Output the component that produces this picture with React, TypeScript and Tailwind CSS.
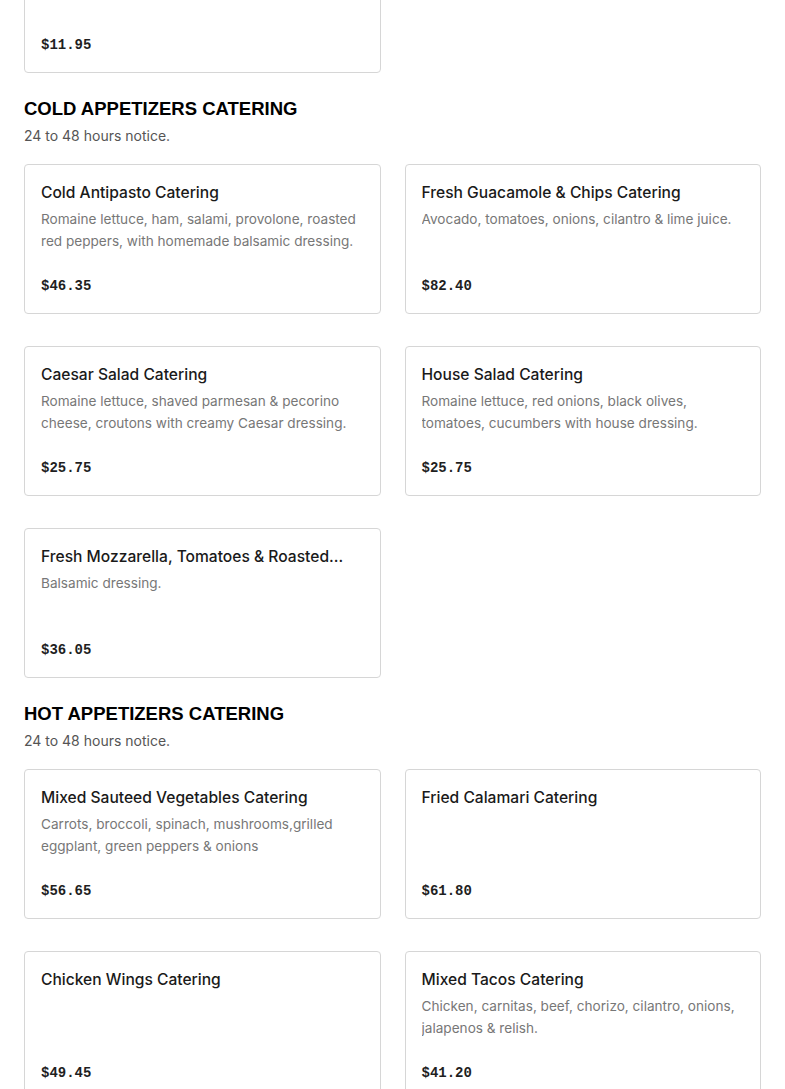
import React from 'react';

interface MenuItem {
  name: string;
  description?: string;
  price: string;
}

interface Section {
  title: string;
  notice: string;
  items: MenuItem[];
}

const sections: Section[] = [
  {
    title: 'COLD APPETIZERS CATERING',
    notice: '24 to 48 hours notice.',
    items: [
      {
        name: 'Cold Antipasto Catering',
        description: 'Romaine lettuce, ham, salami, provolone, roasted red peppers, with homemade balsamic dressing.',
        price: '$46.35',
      },
      {
        name: 'Fresh Guacamole & Chips Catering',
        description: 'Avocado, tomatoes, onions, cilantro & lime juice.',
        price: '$82.40',
      },
      {
        name: 'Caesar Salad Catering',
        description: 'Romaine lettuce, shaved parmesan & pecorino cheese, croutons with creamy Caesar dressing.',
        price: '$25.75',
      },
      {
        name: 'House Salad Catering',
        description: 'Romaine lettuce, red onions, black olives, tomatoes, cucumbers with house dressing.',
        price: '$25.75',
      },
      {
        name: 'Fresh Mozzarella, Tomatoes & Roasted Peppers Catering',
        description: 'Balsamic dressing.',
        price: '$36.05',
      },
    ],
  },
  {
    title: 'HOT APPETIZERS CATERING',
    notice: '24 to 48 hours notice.',
    items: [
      {
        name: 'Mixed Sauteed Vegetables Catering',
        description: 'Carrots, broccoli, spinach, mushrooms,grilled eggplant, green peppers & onions',
        price: '$56.65',
      },
      { name: 'Fried Calamari Catering', price: '$61.80' },
      { name: 'Chicken Wings Catering', price: '$49.45' },
      {
        name: 'Mixed Tacos Catering',
        description: 'Chicken, carnitas, beef, chorizo, cilantro, onions, jalapenos & relish.',
        price: '$41.20',
      },
    ],
  },
];

const ItemCard: React.FC<{ item: MenuItem }> = ({ item }) => (
  <div className="h-[150px] flex flex-col border border-[#d6d6d6] rounded-[4px] bg-white px-4 pt-4 pb-[17px]">
    <h3 className="text-[15.6px] leading-6 font-medium text-[#1a1a1a] line-clamp-1">{item.name}</h3>
    {item.description && (
      <p className="mt-[3px] text-[13.6px] leading-[22px] text-[#777] line-clamp-2">{item.description}</p>
    )}
    <div className="mt-auto text-[14px] leading-5 font-bold text-[#1f1f1f] font-['Liberation_Mono',monospace]">
      {item.price}
    </div>
  </div>
);

export default function App() {
  return (
    <div className="min-h-screen bg-white font-['Inter',sans-serif] px-6 overflow-hidden">
      {/* tail of the previous section, scrolled partly off screen */}
      <div className="grid grid-cols-2 gap-x-6 -mt-[77px]">
        <div className="h-[150px] flex flex-col border border-[#d6d6d6] rounded-[4px] bg-white px-4 pt-4 pb-[17px]">
          <div className="mt-auto text-[14px] leading-5 font-bold text-[#1f1f1f] font-['Liberation_Mono',monospace]">
            $11.95
          </div>
        </div>
      </div>

      {sections.map((section) => (
        <section key={section.title} className="mt-[22px]">
          <h2 className="text-[18.5px] leading-7 font-bold text-black font-['Liberation_Sans',sans-serif]">
            {section.title}
          </h2>
          <p className="mt-[2px] text-[14px] leading-[22px] text-[#555]">{section.notice}</p>
          <div className="mt-[17px] grid grid-cols-2 gap-x-6 gap-y-8">
            {section.items.map((item) => (
              <ItemCard key={item.name} item={item} />
            ))}
          </div>
        </section>
      ))}
    </div>
  );
}
